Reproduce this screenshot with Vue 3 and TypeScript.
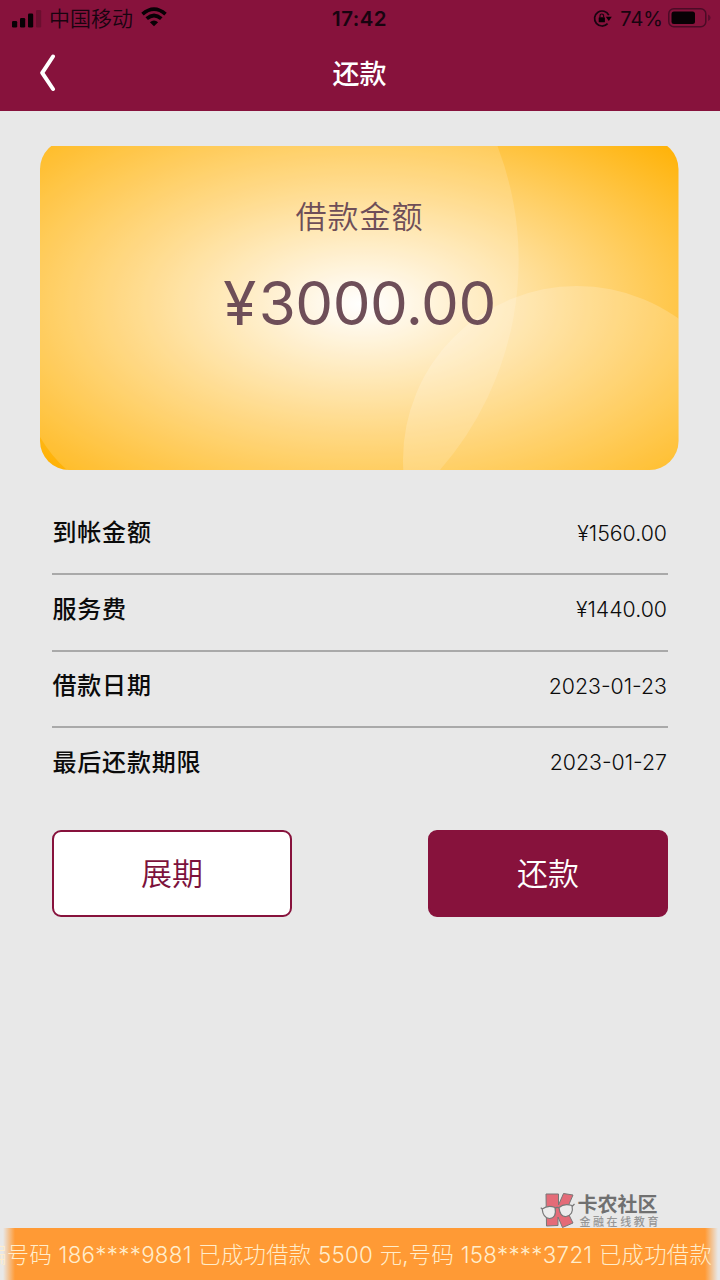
<script setup lang="ts">
interface Row {
  label: string
  value: string
}

const rows: Row[] = [
  { label: '到帐金额', value: '¥1560.00' },
  { label: '服务费', value: '¥1440.00' },
  { label: '借款日期', value: '2023-01-23' },
  { label: '最后还款期限', value: '2023-01-27' },
]
</script>

<template>
  <div class="screen">
    <header class="top">
      <div class="status">
        <div class="carrier">
          <svg class="signal" width="30" height="20" viewBox="0 0 30 20">
            <rect x="0" y="13" width="5.2" height="6.5" rx="1.3" />
            <rect x="8" y="10" width="5.2" height="9.5" rx="1.3" />
            <rect x="16" y="5.5" width="5.2" height="14" rx="1.3" />
            <rect x="24" y="2" width="5.2" height="17.5" rx="1.3" opacity=".22" />
          </svg>
          <span class="carrier-name">中国移动</span>
          <svg class="wifi" width="26" height="20" viewBox="0 0 26 20">
            <g fill="none" stroke="#080105" stroke-width="3.7">
              <path d="M1.5 7.2Q13-2.8 24.5 7.2" />
              <path d="M5.7 11.7Q13 5.3 20.3 11.7" />
            </g>
            <path d="M8.9 15.2Q13 11.8 17.1 15.2L13 19.3Z" />
          </svg>
        </div>
        <span class="clock">17:42</span>
        <div class="power">
          <svg class="lock" width="19" height="19" viewBox="0 0 19 19">
            <path d="M15.8 6.2A7.5 7.5 0 1 0 14.6 14.6" fill="none" stroke="#180410" stroke-width="1.7" />
            <path d="M12.8 7.8H18.8L15.8 12Z" />
            <rect x="5.7" y="8.3" width="6.2" height="5" rx=".6" />
            <path d="M7 8.5V6.8a1.8 1.8 0 0 1 3.6 0v1.7" fill="none" stroke="#180410" stroke-width="1.2" />
          </svg>
          <span class="percent">74%</span>
          <svg class="battery" width="43" height="20" viewBox="0 0 43 20">
            <rect x=".8" y=".8" width="37" height="18" rx="5" fill="none" stroke="#4b0b26" stroke-width="1.5" />
            <rect x="3.5" y="3.5" width="23.5" height="12.5" rx="2.5" />
            <path d="M40 6.5Q42.6 7.5 42.6 9.7T40 13Z" fill="#5c0c2d" />
          </svg>
        </div>
      </div>
      <nav class="nav">
        <svg class="back" width="18" height="38" viewBox="0 0 18 38">
          <path d="M15 2.5L4.2 18.8L15 35" fill="none" stroke="#fff" stroke-width="4" stroke-linecap="round" stroke-linejoin="round" />
        </svg>
        <h1 class="title">还款</h1>
        <span></span>
      </nav>
    </header>

    <main class="body">
      <section class="card">
        <svg class="card-art" width="639" height="324" viewBox="0 0 639 324">
          <defs>
            <radialGradient id="glow" gradientUnits="userSpaceOnUse" cx="0" cy="0" r="1" gradientTransform="translate(322 158) scale(446 234)">
              <stop offset="0" stop-color="#fff" />
              <stop offset=".5" stop-color="#ffd67c" />
              <stop offset="1" stop-color="#ffb000" />
            </radialGradient>
            <clipPath id="card-shape">
              <rect x="0" y="-6" width="638.5" height="330" rx="29" />
            </clipPath>
          </defs>
          <g clip-path="url(#card-shape)">
            <rect width="639" height="324" fill="url(#glow)" />
            <path d="M0 0H457.5A319 319 0 0 1 400 324H27Q11 310 0 291Z" fill="#fff" opacity=".15" />
            <circle cx="537" cy="314" r="174" fill="#fff" opacity=".19" />
          </g>
        </svg>
        <p class="card-label">借款金额</p>
        <p class="card-amount"><span class="yen">¥</span>3000.00</p>
      </section>

      <dl class="details">
        <div v-for="row in rows" :key="row.label" class="row">
          <dt>{{ row.label }}</dt>
          <dd>{{ row.value }}</dd>
        </div>
      </dl>

      <div class="actions">
        <button class="btn outline" type="button">展期</button>
        <button class="btn solid" type="button">还款</button>
      </div>
    </main>

    <div class="brand">
      <svg class="brand-mark" width="36" height="37" viewBox="0 0 36 37">
        <path d="M6 2L18.5 2V13L23.5 1.5L33 3L26.5 18L33 31L22.5 35.5L18 25V33.5L6.5 34Z" fill="#e46b78" stroke="#777" stroke-linejoin="round" />
        <g fill="#ececec" stroke="#777" stroke-width="1.2">
          <path d="M2.2 17Q8 12.5 15 15.5Q17 26 9.5 26.5Q3 26 2.2 17Z" />
          <path d="M19 15.5Q24 11 32 13.5Q34 23 26 24.5Q20 25 19 15.5Z" />
          <path d="M15 16.5Q17 14.5 19 16M2.5 17L.7 15.8M32 14.5L34.5 12" fill="none" />
        </g>
      </svg>
      <div class="brand-text">
        <span class="brand-name">卡农社区</span>
        <span class="brand-sub">金融在线教育</span>
      </div>
    </div>

    <footer class="ticker">
      <span class="ticker-text">编号码 186****9881 已成功借款 5500 元,号码 158****3721 已成功借款</span>
    </footer>
  </div>
</template>

<style>
body {
  margin: 0;
  background: #e8e8e8;
}
</style>

<style scoped>
.screen {
  position: relative;
  display: flex;
  flex-direction: column;
  width: 720px;
  height: 1280px;
  overflow: hidden;
  background: #e8e8e8;
  color: #0b0b0b;
  font-family: Inter, "Noto Sans CJK SC", sans-serif;
}

.top {
  height: 111px;
  background: #87123c;
}

.status {
  display: grid;
  grid-template-columns: 1fr auto 1fr;
  align-items: center;
  height: 37px;
  padding: 0 10px 0 12px;
  color: #180410;
  fill: #080105;
}

.carrier,
.power {
  display: flex;
  align-items: center;
}

.power {
  justify-content: flex-end;
}

.signal {
  margin-top: -2px;
}

.carrier-name {
  margin-left: 7px;
  font-size: 21px;
  font-weight: 350;
  line-height: 36px;
}

.wifi {
  margin: -3px 0 0 8px;
}

.clock {
  margin-right: 3px;
  font-size: 20.5px;
  font-weight: 600;
  letter-spacing: 0.4px;
}

.lock {
  margin-right: 8px;
}

.percent {
  margin-right: 5px;
  font-size: 20px;
}

.battery {
  margin: -2px -1px 0 0;
}

.nav {
  display: grid;
  grid-template-columns: 1fr auto 1fr;
  align-items: center;
  height: 72px;
  padding: 0 39px 0 38px;
}

.title {
  margin: 3px 0 0;
  color: #fff;
  font-size: 27px;
  font-weight: 500;
  line-height: 40px;
}

.body {
  padding: 35px 52px 0;
}

.card {
  position: relative;
  height: 324px;
  margin: 0 -11px 0 -12px;
  color: #6e4e58;
  text-align: center;
}

.card-art {
  position: absolute;
  inset: 0;
}

.card p {
  position: relative;
  margin: 0;
}

.card-label {
  padding-top: 47px;
  font-size: 31px;
  font-weight: 350;
  line-height: 48px;
  letter-spacing: 1px;
}

.card .card-amount {
  margin-top: 26px;
  font-size: 60px;
  line-height: 72px;
  letter-spacing: -0.5px;
}

.yen {
  margin-right: 3px;
}

.details {
  margin: 25px 0 0;
}

.row {
  box-sizing: border-box;
  display: flex;
  align-items: center;
  justify-content: space-between;
  height: 76.5px;
  padding: 0 1px 6px 0.5px;
  border-bottom: 2px solid #a9a9a9;
}

.row:first-child {
  height: 80px;
  padding-bottom: 3px;
}

.row:last-child {
  height: 68px;
  padding-bottom: 0;
  border-bottom: 0;
}

.row dt {
  margin-top: -4px;
  font-size: 24px;
  font-weight: 500;
  letter-spacing: 0.8px;
}

.row dd {
  margin: 0;
  font-size: 21.3px;
  font-weight: 350;
}

.actions {
  display: flex;
  justify-content: space-between;
  margin-top: 34px;
}

.btn {
  box-sizing: border-box;
  width: 240px;
  height: 87px;
  padding: 0;
  border: 2px solid #87123c;
  border-radius: 9px;
  font: 350 31px/1 Inter, "Noto Sans CJK SC", sans-serif;
}

.outline {
  background: #fff;
  color: #7c123c;
}

.solid {
  background: #87123c;
  color: #fff;
}

.brand {
  position: absolute;
  right: 59px;
  bottom: 51px;
  display: flex;
  gap: 1px;
}

.brand-text {
  display: flex;
  flex-direction: column;
  padding-top: 2px;
}

.brand-name {
  color: #707070;
  font-size: 20px;
  font-weight: 700;
  line-height: 22px;
}

.brand-sub {
  margin-left: 2px;
  color: #969696;
  font-size: 11px;
  font-weight: 500;
  line-height: 12px;
  letter-spacing: 2.6px;
}

.ticker {
  display: flex;
  justify-content: flex-end;
  align-items: center;
  height: 52px;
  margin-top: auto;
  background: linear-gradient(90deg, #e8e8e8 0, #e8e8e8 3px, #ff9a35 15px, #ff9a35 705px, #e8e8e8 718px);
  color: #ffedcb;
  white-space: nowrap;
}

.ticker-text {
  margin: -3px 8px 0 0;
  font-size: 22.3px;
  font-weight: 300;
  letter-spacing: 0.3px;
}
</style>
